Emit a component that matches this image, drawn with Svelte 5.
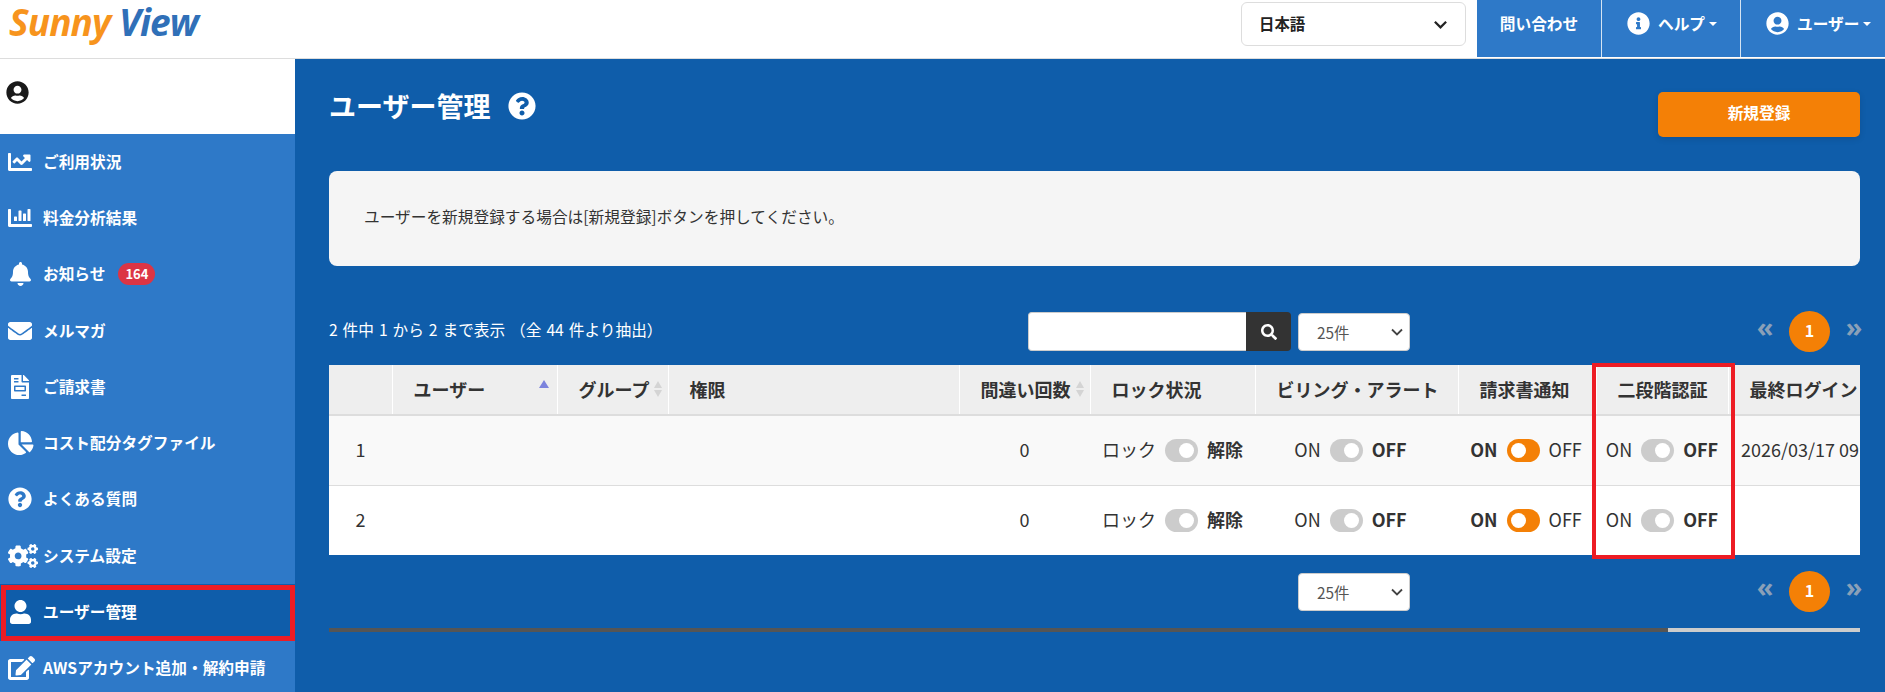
<script lang="ts">
  const paths = {
    line: [512, "M496 384H64V80c0-8.84-7.16-16-16-16H16C7.16 64 0 71.16 0 80v336c0 17.67 14.33 32 32 32h464c8.84 0 16-7.16 16-16v-32c0-8.84-7.16-16-16-16zM464 96H345.94c-21.38 0-32.09 25.85-16.97 40.97l32.4 32.4L288 242.75l-73.37-73.37c-12.5-12.5-32.76-12.5-45.25 0l-68.69 68.69c-6.25 6.25-6.25 16.38 0 22.63l22.62 22.62c6.25 6.25 16.38 6.25 22.63 0L192 237.25l73.37 73.37c12.5 12.5 32.76 12.5 45.25 0l96-96 32.4 32.4c15.12 15.12 40.97 4.41 40.97-16.97V112c0-8.84-7.16-16-16-16z"],
    bar: [512, "M332.8 320h38.4c6.4 0 12.8-6.4 12.8-12.8V172.8c0-6.4-6.4-12.8-12.8-12.8h-38.4c-6.4 0-12.8 6.4-12.8 12.8v134.4c0 6.4 6.4 12.8 12.8 12.8zm96 0h38.4c6.4 0 12.8-6.4 12.8-12.8V76.8c0-6.4-6.4-12.8-12.8-12.8h-38.4c-6.4 0-12.8 6.4-12.8 12.8v230.4c0 6.4 6.4 12.8 12.8 12.8zm-288 0h38.4c6.4 0 12.8-6.4 12.8-12.8v-70.4c0-6.4-6.4-12.8-12.8-12.8h-38.4c-6.4 0-12.8 6.4-12.8 12.8v70.4c0 6.4 6.4 12.8 12.8 12.8zm96 0h38.4c6.4 0 12.8-6.4 12.8-12.8V108.8c0-6.4-6.4-12.8-12.8-12.8h-38.4c-6.4 0-12.8 6.4-12.8 12.8v198.4c0 6.4 6.4 12.8 12.8 12.8zM496 384H64V80c0-8.84-7.16-16-16-16H16C7.16 64 0 71.16 0 80v336c0 17.67 14.33 32 32 32h464c8.84 0 16-7.16 16-16v-32c0-8.84-7.16-16-16-16z"],
    bell: [448, "M224 512c35.32 0 63.97-28.65 63.97-64H160.03c0 35.35 28.65 64 63.97 64zm215.39-149.71c-19.32-20.76-55.47-51.99-55.47-154.29 0-77.7-54.48-139.9-127.94-155.16V32c0-17.67-14.32-32-31.98-32s-31.98 14.33-31.98 32v20.84C118.56 68.1 64.08 130.3 64.08 208c0 102.3-36.15 133.53-55.47 154.29-6 6.45-8.66 14.16-8.61 21.71.11 16.4 12.98 32 32.1 32h383.8c19.12 0 32-15.6 32.1-32 .05-7.55-2.61-15.27-8.61-21.71z"],
    mail: [512, "M502.3 190.8c3.9-3.1 9.7-.2 9.7 4.7V400c0 26.5-21.5 48-48 48H48c-26.5 0-48-21.5-48-48V195.6c0-5 5.7-7.8 9.7-4.7 22.4 17.4 52.1 39.5 154.1 113.6 21.1 15.4 56.7 47.8 92.2 47.6 35.7.3 72-32.8 92.3-47.6 102-74.1 131.6-96.3 154-113.7zM256 320c23.2.4 56.6-29.2 73.4-41.4 132.7-96.3 142.8-104.7 173.4-128.7 5.8-4.5 9.2-11.5 9.2-18.9v-19c0-26.5-21.5-48-48-48H48C21.5 64 0 85.5 0 112v19c0 7.4 3.4 14.3 9.2 18.9 30.6 23.9 40.7 32.4 173.4 128.7 16.8 12.2 50.2 41.8 73.4 41.4z"],
    file: [384, "M288 256H96v64h192v-64zm89-151L279.1 7c-4.5-4.5-10.6-7-17-7H256v128h128v-6.1c0-6.3-2.5-12.4-7-16.9zm-153 31V0H24C10.7 0 0 10.7 0 24v464c0 13.3 10.7 24 24 24h336c13.3 0 24-10.7 24-24V160H248c-13.2 0-24-10.8-24-24zM64 72c0-4.42 3.58-8 8-8h80c4.42 0 8 3.58 8 8v16c0 4.42-3.58 8-8 8H72c-4.42 0-8-3.58-8-8V72zm0 64c0-4.42 3.58-8 8-8h80c4.42 0 8 3.58 8 8v16c0 4.42-3.58 8-8 8H72c-4.42 0-8-3.58-8-8v-16zm256 304c0 4.42-3.58 8-8 8h-80c-4.42 0-8-3.58-8-8v-16c0-4.42 3.58-8 8-8h80c4.42 0 8 3.58 8 8v16zm0-200v96c0 8.84-7.16 16-16 16H80c-8.84 0-16-7.16-16-16v-96c0-8.84 7.16-16 16-16h224c8.84 0 16 7.16 16 16z"],
    pie: [544, "M527.79 288H290.5l158.03 158.03c6.04 6.04 15.98 6.53 22.19.68 38.7-36.46 65.32-85.61 73.13-140.86 1.34-9.46-6.51-17.85-16.06-17.85zm-15.83-64.8C503.72 103.74 408.26 8.28 288.8.04 279.68-.59 272 7.1 272 16.24V240h223.77c9.14 0 16.82-7.68 16.19-16.8zM224 288V50.71c0-9.55-8.39-17.4-17.84-16.06C86.99 51.49-4.1 155.6.14 280.37 4.5 408.51 114.83 513.59 243.03 511.98c50.4-.63 96.97-16.87 135.26-44.03 7.9-5.6 8.42-17.23 1.57-24.08L224 288z"],
    help: [512, "M504 256c0 136.997-111.043 248-248 248S8 392.997 8 256C8 119.083 119.043 8 256 8s248 111.083 248 248zM262.655 90c-54.497 0-89.255 22.957-116.549 63.758-3.536 5.286-2.353 12.415 2.715 16.258l34.699 26.31c5.205 3.947 12.621 3.008 16.665-2.122 17.864-22.658 30.113-35.797 57.303-35.797 20.429 0 45.698 13.148 45.698 32.958 0 14.976-12.363 22.667-32.534 33.976C247.128 238.528 216 254.941 216 296v4c0 6.627 5.373 12 12 12h56c6.627 0 12-5.373 12-12v-1.333c0-28.462 83.186-29.647 83.186-106.667 0-58.002-60.165-102-116.531-102zM256 338c-25.365 0-46 20.635-46 46 0 25.364 20.635 46 46 46s46-20.636 46-46c0-25.365-20.635-46-46-46z"],
    cogs: [640, "M512.1 191l-8.2 14.3c-3 5.3-9.4 7.5-15.1 5.4-11.8-4.4-22.6-10.7-32.1-18.6-4.6-3.8-5.8-10.5-2.8-15.7l8.2-14.3c-6.9-8-12.3-17.3-15.9-27.4h-16.5c-6 0-11.2-4.3-12.2-10.3-2-12-2.1-24.6 0-37.1 1-6 6.2-10.4 12.2-10.4h16.5c3.6-10.1 9-19.4 15.9-27.4l-8.2-14.3c-3-5.2-1.9-11.9 2.8-15.7 9.5-7.9 20.4-14.2 32.1-18.6 5.7-2.1 12.1.1 15.1 5.4l8.2 14.3c10.5-1.9 21.2-1.9 31.7 0L552 6.3c3-5.3 9.4-7.5 15.1-5.4 11.8 4.4 22.6 10.7 32.1 18.6 4.6 3.8 5.8 10.5 2.8 15.7l-8.2 14.3c6.9 8 12.3 17.3 15.9 27.4h16.5c6 0 11.2 4.3 12.2 10.3 2 12 2.1 24.6 0 37.1-1 6-6.2 10.4-12.2 10.4h-16.5c-3.6 10.1-9 19.4-15.9 27.4l8.2 14.3c3 5.2 1.9 11.9-2.8 15.7-9.5 7.9-20.4 14.2-32.1 18.6-5.7 2.1-12.1-.1-15.1-5.4l-8.2-14.3c-10.4 1.9-21.2 1.9-31.7 0zm-10.5-58.8c38.5 29.6 82.4-14.3 52.8-52.8-38.5-29.7-82.4 14.3-52.8 52.8zM386.3 286.1l33.7 16.8c10.1 5.8 14.5 18.1 10.5 29.1-8.9 24.2-26.4 46.4-42.6 65.8-7.4 8.9-20.2 11.1-30.3 5.3l-29.1-16.8c-16 13.7-34.6 24.6-54.9 31.7v33.6c0 11.6-8.3 21.6-19.7 23.6-24.6 4.2-50.4 4.4-75.9 0-11.5-2-20-11.9-20-23.6V418c-20.3-7.2-38.9-18-54.9-31.7L74 403c-10 5.8-22.9 3.6-30.3-5.3-16.2-19.4-33.3-41.6-42.2-65.7-4-10.9.4-23.2 10.5-29.1l33.3-16.8c-3.9-20.9-3.9-42.4 0-63.4L12 205.8c-10.1-5.8-14.6-18.1-10.5-29 8.9-24.2 26-46.4 42.2-65.8 7.4-8.9 20.2-11.1 30.3-5.3l29.1 16.8c16-13.7 34.6-24.6 54.9-31.7V57.1c0-11.5 8.2-21.5 19.6-23.5 24.6-4.2 50.5-4.4 76-.1 11.5 2 20 11.9 20 23.6v33.6c20.3 7.2 38.9 18 54.9 31.7l29.1-16.8c10-5.8 22.9-3.6 30.3 5.3 16.2 19.4 33.2 41.6 42.1 65.8 4 10.9.1 23.2-10 29.1l-33.7 16.8c3.9 21 3.9 42.5 0 63.5zm-117.6 21.1c59.2-77-28.7-164.9-105.7-105.7-59.2 77 28.7 164.9 105.7 105.7zm243.4 182.7l-8.2 14.3c-3 5.3-9.4 7.5-15.1 5.4-11.8-4.4-22.6-10.7-32.1-18.6-4.6-3.8-5.8-10.5-2.8-15.7l8.2-14.3c-6.9-8-12.3-17.3-15.9-27.4h-16.5c-6 0-11.2-4.3-12.2-10.3-2-12-2.1-24.6 0-37.1 1-6 6.2-10.4 12.2-10.4h16.5c3.6-10.1 9-19.4 15.9-27.4l-8.2-14.3c-3-5.2-1.9-11.9 2.8-15.7 9.5-7.9 20.4-14.2 32.1-18.6 5.7-2.1 12.1.1 15.1 5.4l8.2 14.3c10.5-1.9 21.2-1.9 31.7 0l8.2-14.3c3-5.3 9.4-7.5 15.1-5.4 11.8 4.4 22.6 10.7 32.1 18.6 4.6 3.8 5.8 10.5 2.8 15.7l-8.2 14.3c6.9 8 12.3 17.3 15.9 27.4h16.5c6 0 11.2 4.3 12.2 10.3 2 12 2.1 24.6 0 37.1-1 6-6.2 10.4-12.2 10.4h-16.5c-3.6 10.1-9 19.4-15.9 27.4l8.2 14.3c3 5.2 1.9 11.9-2.8 15.7-9.5 7.9-20.4 14.2-32.1 18.6-5.7 2.1-12.1-.1-15.1-5.4l-8.2-14.3c-10.4 1.9-21.2 1.9-31.7 0zM501.6 431c38.5 29.6 82.4-14.3 52.8-52.8-38.5-29.6-82.4 14.3-52.8 52.8z"],
    user: [448, "M224 256c70.7 0 128-57.3 128-128S294.7 0 224 0 96 57.3 96 128s57.3 128 128 128zm89.6 32h-16.7c-22.2 10.2-46.9 16-72.9 16s-50.6-5.8-72.9-16h-16.7C60.2 288 0 348.2 0 422.4V464c0 26.5 21.5 48 48 48h352c26.5 0 48-21.5 48-48v-41.6c0-74.2-60.2-134.4-134.4-134.4z"],
    edit: [576, "M402.6 83.2l90.2 90.2c3.8 3.8 3.8 10 0 13.8L274.4 405.6l-92.8 10.3c-12.4 1.4-22.9-9.1-21.5-21.5l10.3-92.8L388.8 83.2c3.8-3.8 10-3.8 13.8 0zm162-22.9l-48.8-48.8c-15.2-15.2-39.9-15.2-55.2 0l-35.4 35.4c-3.8 3.8-3.8 10 0 13.8l90.2 90.2c3.8 3.8 10 3.8 13.8 0l35.4-35.4c15.2-15.3 15.2-40 0-55.2zM384 346.2V448H64V128h229.8c3.2 0 6.2-1.3 8.5-3.5l40-40c7.6-7.6 2.2-20.5-8.5-20.5H48C21.5 64 0 85.5 0 112v352c0 26.5 21.5 48 48 48h352c26.5 0 48-21.5 48-48V306.2c0-10.7-12.9-16-20.5-8.5l-40 40c-2.2 2.3-3.5 5.3-3.5 8.5z"],
    account: [496, "M248 8C111 8 0 119 0 256s111 248 248 248 248-111 248-248S385 8 248 8zm0 96c48.6 0 88 39.4 88 88s-39.4 88-88 88-88-39.4-88-88 39.4-88 88-88zm0 344c-58.7 0-111.3-26.6-146.5-68.2 18.8-35.4 55.6-59.8 98.5-59.8 2.4 0 4.8.4 7.1 1.1 13 4.2 26.6 6.9 40.9 6.9 14.3 0 28-2.7 40.9-6.9 2.3-.7 4.7-1.1 7.1-1.1 42.9 0 79.7 24.4 98.5 59.8C359.3 421.4 306.7 448 248 448z"],
    info: [512, "M256 8C119.043 8 8 119.083 8 256c0 136.997 111.043 248 248 248s248-111.003 248-248C504 119.083 392.957 8 256 8zm0 110c23.196 0 42 18.804 42 42s-18.804 42-42 42-42-18.804-42-42 18.804-42 42-42zm56 254c0 6.627-5.373 12-12 12h-88c-6.627 0-12-5.373-12-12v-24c0-6.627 5.373-12 12-12h12v-64h-12c-6.627 0-12-5.373-12-12v-24c0-6.627 5.373-12 12-12h64c6.627 0 12 5.373 12 12v100h12c6.627 0 12 5.373 12 12v24z"],
    search: [512, "M505 442.7L405.3 343c-4.5-4.5-10.6-7-17-7H372c27.6-35.3 44-79.7 44-128C416 93.1 322.9 0 208 0S0 93.1 0 208s93.1 208 208 208c48.3 0 92.7-16.4 128-44v16.3c0 6.4 2.5 12.5 7 17l99.7 99.7c9.4 9.4 24.6 9.4 33.9 0l28.3-28.3c9.4-9.4 9.4-24.6.1-34zM208 336c-70.7 0-128-57.2-128-128 0-70.7 57.2-128 128-128 70.7 0 128 57.2 128 128 0 70.7-57.2 128-128 128z"]
  } as Record<string, [number, string]>;

  const navItems = [
    { icon: "line", label: "ご利用状況" },
    { icon: "bar", label: "料金分析結果" },
    { icon: "bell", label: "お知らせ", badge: "164" },
    { icon: "mail", label: "メルマガ" },
    { icon: "file", label: "ご請求書" },
    { icon: "pie", label: "コスト配分タグファイル" },
    { icon: "help", label: "よくある質問" },
    { icon: "cogs", label: "システム設定" },
    { icon: "user", label: "ユーザー管理", active: true },
    { icon: "edit", label: "AWSアカウント追加・解約申請" }
  ];

  const columns = [
    { key: "no", label: "" },
    { key: "user", label: "ユーザー", sort: "asc" },
    { key: "group", label: "グループ", sort: "both" },
    { key: "role", label: "権限" },
    { key: "miss", label: "間違い回数", sort: "both" },
    { key: "lock", label: "ロック状況" },
    { key: "bill", label: "ビリング・アラート" },
    { key: "invoice", label: "請求書通知" },
    { key: "mfa", label: "二段階認証" },
    { key: "login", label: "最終ログイン" }
  ];

  const rows = [
    { no: 1, miss: 0, login: "2026/03/17 09:12" },
    { no: 2, miss: 0, login: "" }
  ];
</script>

{#snippet icon(name: string, cls: string)}
  <svg class={cls} viewBox="0 0 {paths[name][0]} 512" aria-hidden="true"><path d={paths[name][1]} /></svg>
{/snippet}

{#snippet toggle(left: string, right: string, on: boolean)}
  <div class="switch">
    <span class:strong={on}>{left}</span>
    <span class="track" class:on><i></i></span>
    <span class:strong={!on}>{right}</span>
  </div>
{/snippet}

{#snippet pager()}
  <div class="pager">
    <span class="arrow">«</span>
    <span class="current">1</span>
    <span class="arrow">»</span>
  </div>
{/snippet}

<div class="page">
  <header class="topbar">
    <div class="logo"><span class="sunny">Sunny</span> <span class="view">View</span></div>
    <div class="lang">
      <span>日本語</span>
      <svg class="chevron" viewBox="0 0 16 16" aria-hidden="true"><path d="M2 5l6 6 6-6" /></svg>
    </div>
    <nav class="topnav">
      <div class="topitem contact">問い合わせ</div>
      <div class="topitem helpmenu">
        {@render icon("info", "topicon")}
        <span>ヘルプ</span><i class="caret"></i>
      </div>
      <div class="topitem usermenu">
        {@render icon("account", "topicon")}
        <span>ユーザー</span><i class="caret"></i>
      </div>
    </nav>
  </header>

  <div class="content">
    <aside class="sidebar">
      <div class="profile">{@render icon("account", "profile-icon")}</div>
      {#each navItems as item}
        <div class="navitem" class:active={item.active}>
          <span class="navicon">{@render icon(item.icon, "navsvg")}</span>
          <span class="navlabel">{item.label}</span>
          {#if item.badge}<span class="badge">{item.badge}</span>{/if}
        </div>
      {/each}
    </aside>

    <main class="main">
      <div class="titlerow">
        <h1>ユーザー管理</h1>
        {@render icon("help", "titlehelp")}
        <button class="primary">新規登録</button>
      </div>

      <div class="notice">ユーザーを新規登録する場合は[新規登録]ボタンを押してください。</div>

      <div class="bar top">
        <div class="count">2 件中 1 から 2 まで表示 （全 44 件より抽出）</div>
        <div class="search">
          <input type="text" />
          <button class="searchbtn" aria-label="検索">{@render icon("search", "searchicon")}</button>
        </div>
        <select class="size"><option>25件</option></select>
        {@render pager()}
      </div>

      <div class="tablewrap">
        <div class="scroller">
          <table>
            <thead>
              <tr>
                {#each columns as col}
                  <th class={col.key}>
                    <div class="thin">
                      <span>{col.label}</span>
                      {#if col.sort}
                        <span class="sort" class:asc={col.sort === "asc"}>
                          <i class="up"></i>
                          <i class="down"></i>
                        </span>
                      {/if}
                    </div>
                  </th>
                {/each}
              </tr>
            </thead>
            <tbody>
              {#each rows as row}
                <tr>
                  <td class="center">{row.no}</td>
                  <td></td>
                  <td></td>
                  <td></td>
                  <td class="center">{row.miss}</td>
                  <td>{@render toggle("ロック", "解除", false)}</td>
                  <td class="billcell">{@render toggle("ON", "OFF", false)}</td>
                  <td class="invoicecell">{@render toggle("ON", "OFF", true)}</td>
                  <td>{@render toggle("ON", "OFF", false)}</td>
                  <td class="date">{row.login}</td>
                </tr>
              {/each}
            </tbody>
          </table>
        </div>
        <div class="redbox"></div>
      </div>

      <div class="bar bottom">
        <select class="size"><option>25件</option></select>
        {@render pager()}
      </div>

      <div class="scrollbar"><div class="thumb"></div></div>
    </main>
  </div>
</div>

<style>
  :global(body) {
    margin: 0;
    overflow: hidden;
    font-family: "Noto Sans CJK JP", "Noto Sans", sans-serif;
    color: #333;
  }

  .page {
    width: 1885px;
    height: 692px;
    overflow: hidden;
    display: flex;
    flex-direction: column;
  }

  /* top bar */
  .topbar {
    height: 59px;
    box-sizing: border-box;
    flex: none;
    display: flex;
    align-items: flex-start;
    background: #fff;
    border-bottom: 1px solid #ddd;
  }

  .logo {
    width: 1241px;
    padding: 0 0 0 9px;
    box-sizing: border-box;
    font-family: "Open Sans", sans-serif;
    font-style: italic;
    font-weight: 700;
    font-size: 37px;
    line-height: 43px;
    letter-spacing: -0.9px;
    white-space: nowrap;
  }

  .sunny { color: #f7941d; }
  .view { color: #3070b8; }

  .lang {
    width: 225px;
    height: 44px;
    margin-top: 2px;
    box-sizing: border-box;
    border: 1px solid #ddd;
    border-radius: 6px;
    display: flex;
    align-items: center;
    justify-content: space-between;
    padding: 0 17px 0 17px;
    font-size: 15.4px;
    font-weight: 700;
    color: #222;
  }

  .lang span {
    padding-bottom: 2px;
  }

  .chevron {
    width: 15px;
    height: 15px;
    fill: none;
    stroke: #222;
    stroke-width: 2.4;
  }

  .topnav {
    margin-left: 11px;
    flex: 1;
    height: 57px;
    display: flex;
    background: #2e79c8;
    color: #fff;
    font-size: 15.7px;
    font-weight: 700;
  }

  .topitem {
    display: flex;
    align-items: center;
    height: 100%;
    box-sizing: border-box;
    padding-bottom: 11px;
    border-right: 1px solid #d5e4f3;
    white-space: nowrap;
  }

  .contact { width: 125px; justify-content: center; }
  .helpmenu { width: 139px; padding-left: 25px; }
  .usermenu { flex: 1; padding-left: 25px; border-right: 0; }

  .topicon {
    width: 23px;
    height: 23px;
    fill: #fff;
    margin-right: 8px;
  }

  .caret {
    margin: 2px 0 0 4px;
    border-top: 4px solid #fff;
    border-left: 4px solid transparent;
    border-right: 4px solid transparent;
  }

  .content {
    flex: 1;
    display: flex;
    min-height: 0;
  }

  /* sidebar */
  .sidebar {
    width: 295px;
    flex: none;
    background: #2e79c8;
    color: #fff;
  }

  .profile {
    height: 75px;
    box-sizing: border-box;
    background: #fff;
    padding: 22px 6px;
  }

  .profile-icon {
    display: block;
    width: 23px;
    height: 23px;
    fill: #1a1a1a;
  }

  .navitem {
    position: relative;
    height: 56.3px;
    display: flex;
    align-items: center;
    padding-left: 8px;
    font-size: 15.7px;
    font-weight: 700;
    white-space: nowrap;
  }

  .navitem.active {
    background: #0f5daa;
  }

  .navitem.active::after {
    content: "";
    position: absolute;
    inset: 1px 0 0 1px;
    border: 5px solid #ed1c24;
  }

  .navicon {
    width: 24px;
    height: 24px;
    display: flex;
    justify-content: safe center;
    flex: none;
    margin-bottom: 1px;
  }

  .navsvg {
    height: 24px;
    flex: none;
    fill: #fff;
  }

  .navlabel {
    margin-left: 11px;
    padding-bottom: 2px;
  }

  .badge {
    margin-left: 13px;
    width: 37px;
    height: 22px;
    border-radius: 11px;
    background: #dc3545;
    font-size: 13px;
    line-height: 22px;
    text-align: center;
    margin-bottom: 1px;
  }

  /* main */
  .main {
    flex: 1;
    min-width: 0;
    background: #0f5daa;
    padding: 33px 25px 0 34px;
  }

  .titlerow {
    display: flex;
    align-items: flex-start;
    height: 45px;
  }

  h1 {
    margin: 0;
    font-size: 27px;
    font-weight: 700;
    line-height: 28px;
    color: #fff;
  }

  .titlehelp {
    width: 28px;
    height: 28px;
    margin-left: 18px;
    fill: #fff;
  }

  .primary {
    margin-left: auto;
    width: 202px;
    height: 45px;
    border: 0;
    border-radius: 5px;
    padding: 0 0 4px;
    background: #f48006;
    color: #fff;
    font: 700 15.7px "Noto Sans CJK JP", sans-serif;
    box-shadow: 0 2px 6px rgba(0, 0, 0, 0.12);
  }

  .notice {
    margin-top: 34px;
    height: 95px;
    box-sizing: border-box;
    padding: 0 35px 4px;
    display: flex;
    align-items: center;
    background: #f5f5f5;
    border-radius: 8px;
    font-size: 15.7px;
    color: #333;
  }

  .bar {
    display: grid;
    grid-template-columns: 699px 270px 112px 1fr;
    align-items: center;
    height: 39px;
  }

  .bar.top {
    margin-top: 45px;
  }

  .bar.bottom {
    margin-top: 16px;
  }

  .bar.bottom .size {
    grid-column: 3;
  }

  .count {
    color: #fff;
    font-size: 15.7px;
    word-spacing: 1.4px;
    padding-bottom: 4px;
    white-space: nowrap;
  }

  .search {
    display: flex;
    width: 263px;
    height: 39px;
  }

  .search input {
    flex: 1;
    min-width: 0;
    box-sizing: border-box;
    border: 1px solid #ccc;
    border-right: 0;
    border-radius: 4px 0 0 4px;
    background: #fff;
  }

  .searchbtn {
    width: 45px;
    border: 0;
    padding: 0;
    border-radius: 0 4px 4px 0;
    background: #333;
    display: flex;
    align-items: center;
    justify-content: center;
  }

  .searchicon {
    width: 16px;
    height: 16px;
    fill: #fff;
  }

  .size {
    appearance: none;
    width: 112px;
    height: 38px;
    box-sizing: border-box;
    padding-left: 18px;
    border: 1px solid #ccc;
    border-radius: 4px;
    background: #fff url("data:image/svg+xml,%3Csvg xmlns='http://www.w3.org/2000/svg' width='12' height='8'%3E%3Cpath d='M1 1.5l5 5 5-5' fill='none' stroke='%23444' stroke-width='1.8'/%3E%3C/svg%3E") no-repeat right 6px center;
    color: #555;
    font: 400 15.4px "Noto Sans CJK JP", sans-serif;
  }

  .pager {
    display: flex;
    align-items: center;
    justify-content: flex-end;
    margin-right: -1px;
    gap: 17px;
  }

  .arrow {
    display: flex;
    justify-content: center;
    width: 14px;
    color: #8aa0b8;
    font-family: "Noto Sans", sans-serif;
    font-size: 27px;
    font-weight: 700;
    line-height: 1;
    padding-bottom: 10px;
  }

  .pager .current {
    width: 41px;
    height: 41px;
    border-radius: 50%;
    background: #f48006;
    color: #fff;
    font-size: 16px;
    font-weight: 700;
    line-height: 38px;
    text-align: center;
  }

  /* table */
  .tablewrap {
    position: relative;
    margin-top: 15px;
  }

  .scroller {
    overflow: hidden;
  }

  table {
    table-layout: fixed;
    border-collapse: collapse;
    width: 1731px;
    font-size: 18px;
    color: #333;
  }

  th {
    height: 50px;
    box-sizing: border-box;
    padding: 0 0 2px 21px;
    background: #eee;
    border-right: 1px solid #fff;
    border-bottom: 2px solid #ddd;
    font-weight: 700;
    text-align: left;
    white-space: nowrap;
  }

  .thin {
    display: flex;
    align-items: center;
    justify-content: space-between;
    padding-right: 6px;
  }

  th.no { width: 63px; }
  th.user { width: 165px; }
  th.group { width: 111px; }
  th.role { width: 291px; }
  th.miss { width: 131px; }
  th.lock { width: 165px; }
  th.bill { width: 203px; }
  th.invoice { width: 138px; }
  th.mfa { width: 132px; }
  th.login { width: 332px; }

  .sort {
    display: flex;
    flex-direction: column;
    gap: 2px;
  }

  .sort i {
    display: block;
    border-left: 4px solid transparent;
    border-right: 4px solid transparent;
  }

  .sort .up { border-bottom: 7px solid #d4d4d4; }
  .sort .down { border-top: 7px solid #d4d4d4; }

  .sort.asc { margin-right: 2px; }
  .sort.asc .up {
    border-bottom: 8px solid #7c83dd;
    border-left-width: 5px;
    border-right-width: 5px;
    margin-bottom: 9px;
  }
  .sort.asc .down { display: none; }

  td {
    height: 70px;
    box-sizing: border-box;
    padding: 0 0 2px;
    border-bottom: 1px solid #ddd;
    background: #fff;
    white-space: nowrap;
  }

  tbody tr:first-child td { background: #f9f9f9; }
  tbody tr:last-child td { border-bottom: 0; }

  td.center { text-align: center; }
  td.date { padding-left: 13px; }
  td.billcell { padding-right: 12px; }
  td.invoicecell { padding-right: 2px; }

  .switch {
    display: flex;
    align-items: center;
    justify-content: center;
    gap: 9px;
  }

  .strong { font-weight: 700; }

  .track {
    width: 33px;
    height: 23px;
    margin-top: 2px;
    border-radius: 12px;
    background: #ccc;
    display: flex;
    align-items: center;
    justify-content: flex-end;
    padding: 0 4px;
    box-sizing: border-box;
  }

  .track.on {
    background: #f48006;
    justify-content: flex-start;
  }

  .track i {
    width: 15px;
    height: 15px;
    border-radius: 50%;
    background: #fff;
  }

  .redbox {
    position: absolute;
    left: 1263px;
    top: -2px;
    width: 143px;
    height: 196px;
    box-sizing: border-box;
    border: 4px solid #ed1c24;
    pointer-events: none;
  }

  .scrollbar {
    margin-top: 18px;
    height: 4px;
    background: #ccc;
  }

  .thumb {
    width: 1339px;
    height: 100%;
    background: #555;
  }
</style>
